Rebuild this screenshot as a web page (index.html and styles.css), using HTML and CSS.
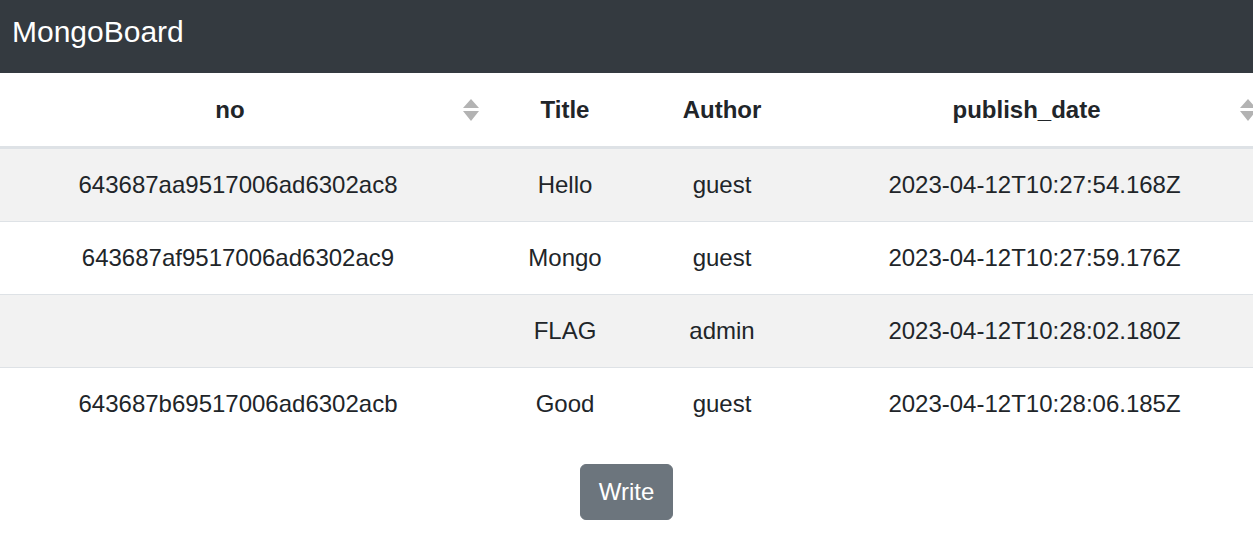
FILE: index.html
```html
<!DOCTYPE html>
<html lang="en">
<head>
<meta charset="utf-8">
<title>MongoBoard</title>
<link rel="stylesheet" href="styles.css">
</head>
<body>
<nav class="navbar"><span class="brand">MongoBoard</span></nav>
<div class="table-wrap">
  <table class="board">
    <colgroup>
      <col class="c-no"><col class="c-title"><col class="c-author"><col class="c-date">
    </colgroup>
    <thead>
      <tr>
        <th class="sortable"><div class="th-inner">no</div>
          <svg class="sort sort-no" viewBox="0 0 16 22" width="16" height="22"><path d="M8 0 L16 9 L0 9 Z M0 12 L16 12 L8 22 Z" fill="#b3b3b3"/></svg>
        </th>
        <th><div class="th-inner plain">Title</div></th>
        <th><div class="th-inner plain">Author</div></th>
        <th class="sortable"><div class="th-inner">publish_date</div>
          <svg class="sort sort-date" viewBox="0 0 16 22" width="16" height="22"><path d="M8 0 L16 9 L0 9 Z M0 12 L16 12 L8 22 Z" fill="#b3b3b3"/></svg>
        </th>
      </tr>
    </thead>
    <tbody>
      <tr><td>643687aa9517006ad6302ac8</td><td>Hello</td><td>guest</td><td>2023-04-12T10:27:54.168Z</td></tr>
      <tr><td>643687af9517006ad6302ac9</td><td>Mongo</td><td>guest</td><td>2023-04-12T10:27:59.176Z</td></tr>
      <tr><td></td><td>FLAG</td><td>admin</td><td>2023-04-12T10:28:02.180Z</td></tr>
      <tr><td>643687b69517006ad6302acb</td><td>Good</td><td>guest</td><td>2023-04-12T10:28:06.185Z</td></tr>
    </tbody>
  </table>
</div>
<div class="actions"><button class="btn">Write</button></div>
</body>
</html>
```
FILE: styles.css
```css
html, body {
  margin: 0;
  padding: 0;
  background: #fff;
  font-family: "Liberation Sans", Arial, sans-serif;
  color: #212529;
  overflow: hidden;
}
.navbar {
  background: #343a40;
  height: 73px;
  box-sizing: border-box;
  padding: 9px 12px 0;
}
.brand {
  color: #fff;
  font-size: 30px;
  line-height: 45px;
  display: block;
}
.table-wrap {
  width: 1253px;
  overflow: hidden;
}
.board {
  border-collapse: collapse;
  table-layout: fixed;
  width: 1279px;
  font-size: 24px;
  line-height: 36px;
}
.c-no { width: 476px; }
.c-title { width: 178px; }
.c-author { width: 136px; }
.c-date { width: 489px; }
.board th {
  position: relative;
  padding: 0;
  font-weight: 700;
  text-align: center;
  border-bottom: 3px solid #dee2e6;
}
.th-inner {
  padding: 19px 34px 18px 18px;
}
.th-inner.plain {
  padding: 19px 0 18px;
}
.sort {
  position: absolute;
  top: 26px;
}
.sort-no { right: -3px; }
.sort-date { right: 23px; }
.board td {
  text-align: center;
  padding: 18px 0;
  border-top: 1px solid #dee2e6;
  height: 36px;
}
.board tbody tr:first-child td {
  border-top: none;
}
.board tbody tr:nth-child(odd) {
  background: #f2f2f2;
}
.actions {
  display: flex;
  justify-content: center;
  padding-top: 24px;
}
.btn {
  font-family: "Liberation Sans", Arial, sans-serif;
  font-size: 24px;
  line-height: 36px;
  color: #fff;
  background: #6c757d;
  border: 1.5px solid #6c757d;
  border-radius: 6px;
  padding: 9px 18px;
}
```
